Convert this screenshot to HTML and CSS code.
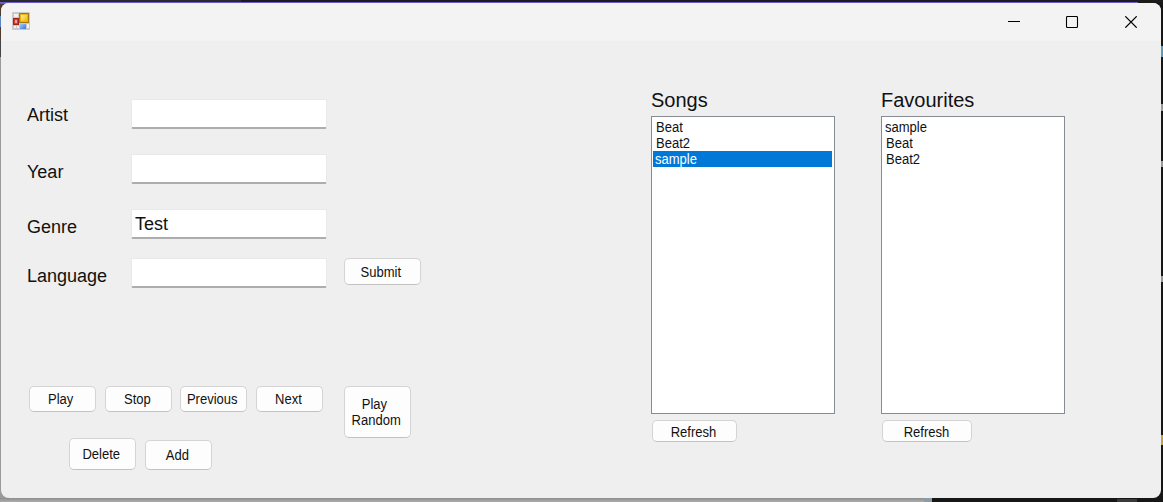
FILE: index.html
```html
<!DOCTYPE html>
<html lang="en">
<head>
<meta charset="utf-8">
<title>Music player</title>
<link rel="stylesheet" href="styles.css">
</head>
<body>
<div class="desktop">
  <div class="window">
    <header class="titlebar">
      <svg class="app-icon" width="18" height="18" viewBox="0 0 18 18">
        <defs>
          <linearGradient id="gold" x1="0" y1="0" x2="1" y2="1"><stop offset="0" stop-color="#fff0a0"/><stop offset="1" stop-color="#f3b400"/></linearGradient>
          <linearGradient id="blue" x1="0" y1="0" x2="1" y2="1"><stop offset="0" stop-color="#a0c8ff"/><stop offset="1" stop-color="#3478e0"/></linearGradient>
        </defs>
        <rect width="18" height="18" rx="1" fill="#c9c9c9"/>
        <path d="M2 2h4v3H2zM2 14h2v2H2zM5 14h2v2H5zM15 12h2v4h-2z" fill="#f2f2f2"/>
        <rect x="7" y="1" width="10" height="10" fill="#a57a14"/>
        <rect x="8" y="2" width="8" height="8" fill="#e8b213"/>
        <rect x="9" y="3" width="6" height="6" fill="url(#gold)"/>
        <rect x="1" y="6" width="6" height="7" fill="#a32318"/>
        <rect x="2" y="7" width="4" height="5" fill="#cf3d2e"/>
        <rect x="3" y="8" width="2" height="3" fill="#f0a49a"/>
        <rect x="8" y="12" width="6" height="5" fill="url(#blue)"/>
      </svg>
      <svg class="caption" width="130" height="12" viewBox="0 0 130 12" fill="none" stroke="#000">
        <path d="M0 5.5h12" stroke-width="1.1"/>
        <rect x="58.5" y=".5" width="11" height="11" rx="1" stroke-width="1.1"/>
        <path d="M117.3.3l11.4 11.4M128.7.3l-11.4 11.4" stroke-width="1.2"/>
      </svg>
    </header>
    <main class="client">
      <section class="editor">
        <form class="fields">
          <label class="label">Artist</label><div class="input"></div>
          <label class="label label-year">Year</label><div class="input"></div>
          <label class="label label-genre">Genre</label><div class="input">Test</div>
          <label class="label label-language">Language</label><div class="input"></div>
          <button type="button" class="btn submit"><span>Submit</span></button>
        </form>
        <div class="controls">
          <div class="control-rows">
            <div class="playback">
              <button class="btn"><span>Play</span></button>
              <button class="btn stop"><span>Stop</span></button>
              <button class="btn"><span>Previous</span></button>
              <button class="btn next"><span>Next</span></button>
            </div>
            <div class="manage">
              <button class="btn delete"><span>Delete</span></button>
              <button class="btn add"><span>Add</span></button>
            </div>
          </div>
          <button class="btn random"><span>Play<br>&nbsp;Random</span></button>
        </div>
      </section>
      <section class="list-panel">
        <h2 class="heading">Songs</h2>
        <ul class="list">
          <li class="indent"><span>Beat</span></li>
          <li class="indent"><span>Beat2</span></li>
          <li class="selected"><span>sample</span></li>
        </ul>
        <button class="btn refresh"><span>Refresh</span></button>
      </section>
      <section class="list-panel">
        <h2 class="heading">Favourites</h2>
        <ul class="list">
          <li><span>sample</span></li>
          <li class="indent"><span>Beat</span></li>
          <li class="indent"><span>Beat2</span></li>
        </ul>
        <button class="btn refresh wide"><span>Refresh</span></button>
      </section>
    </main>
  </div>
</div>
</body>
</html>
```
FILE: styles.css
```css
* { box-sizing: border-box; }

body {
  margin: 0;
  overflow: hidden;
  font-family: "Liberation Sans", Arial, sans-serif;
  color: #111;
}

.desktop {
  width: 1163px;
  height: 502px;
  padding: 3px 2px 4px 1px;
  background:
    linear-gradient(#6a5acd, #6a5acd) 0 2px / 1138px 2px no-repeat,
    linear-gradient(90deg, #2a2a2c 241px, #1b1b1b 241px) 0 0 / 100% 3px no-repeat,
    linear-gradient(#8d8d8d, #adadad) 0 498px / 924px 4px no-repeat,
    linear-gradient(#8d9aa8, #8d9aa8) 924px 498px / 8px 4px no-repeat,
    linear-gradient(#3a3a3a, #3a3a3a) 1117px 499px / 20px 3px no-repeat,
    linear-gradient(#999, #999) 1161px 104px / 2px 7px no-repeat,
    linear-gradient(#999, #999) 1161px 161px / 2px 6px no-repeat,
    linear-gradient(#999, #999) 1161px 276px / 2px 6px no-repeat,
    linear-gradient(#5b9ab8, #5b9ab8) 1161px 46px / 2px 11px no-repeat,
    linear-gradient(#c5a23c, #c5a23c) 1161px 435px / 2px 10px no-repeat,
    linear-gradient(#4d3b2c 16px, #5c86c0 16px 27px, #4d3b2c 27px 38px, #444 38px 57px, #9a9a9a 57px) 0 0 / 8px 100% no-repeat,
    #161616;
}

.window {
  height: 495px;
  border-radius: 8px;
  background: #efefef;
  overflow: hidden;
}

.titlebar {
  display: flex;
  justify-content: space-between;
  height: 38px;
  padding: 9px 23px 0 11px;
  background: #f3f3f3;
}

.caption { margin-top: 4px; }

.client {
  display: grid;
  grid-template-columns: 624px 184px 230px;
  padding-left: 26px;
}

.client .list-panel + .list-panel { margin-left: 46px; }

.fields {
  display: grid;
  grid-template-columns: 104px 196px 77px;
  grid-template-rows: 55px 55px 49px 30px;
  padding-top: 58px;
}

.label {
  grid-column: 1;
  padding-top: 5px;
  font-size: 18px;
  line-height: 22px;
}

.label-year,
.label-genre,
.label-language { padding-top: 7px; }

.input {
  grid-column: 2;
  height: 30px;
  padding: 0 3px;
  border: 1px solid #e9e9e9;
  border-bottom: 2px solid #adadad;
  border-radius: 2px;
  background: #fff;
  font-size: 18px;
  line-height: 29px;
}

.btn {
  display: flex;
  align-items: center;
  justify-content: center;
  width: 67px;
  height: 26px;
  padding: 0;
  border: 1px solid #d4d4d4;
  border-bottom-color: #c2c2c2;
  border-radius: 5px;
  background: #fdfdfd;
  color: #111;
  font: 14px/16px "Liberation Sans", Arial, sans-serif;
}

.btn span {
  display: block;
  transform: scaleX(.93);
  white-space: nowrap;
}

.submit {
  grid-column: 3;
  grid-row: 4;
  width: 77px;
  height: 27px;
  margin-left: 17px;
  padding-right: 4px;
}

.controls {
  display: flex;
  gap: 20px;
  padding: 98px 0 0 2px;
}

.playback {
  display: flex;
  width: 295px;
  gap: 9px;
}

.playback .btn { padding-right: 3px; }
.playback .stop { margin-right: -1px; }

.manage {
  display: flex;
  gap: 9px;
  padding: 26px 0 0 40px;
}

.delete { height: 32px; padding: 0 2px 1px 0; }
.add { height: 30px; margin-top: 2px; padding-right: 3px; }

.random {
  height: 52px;
  padding-right: 7px;
}

.list-panel { padding-top: 47px; width: 184px; }

.heading {
  margin: 0;
  font-size: 20px;
  font-weight: 400;
  line-height: 24px;
}

.list {
  height: 298px;
  margin: 4px 0 6px;
  padding: 2px 1px;
  border: 1px solid #868b94;
  background: #fff;
  list-style: none;
  font-size: 14px;
  line-height: 17px;
}

.list li {
  height: 16px;
  padding-left: 2px;
}

.list .indent { padding-left: 3px; }

.list span {
  display: inline-block;
  transform: scaleX(.93);
  transform-origin: left;
}

.list .selected {
  margin-right: 1px;
  background: #0078d7;
  color: #fff;
}

.refresh {
  width: 85px;
  height: 22px;
  margin-left: 1px;
  padding-top: 2px;
  padding-right: 1px;
}

.wide {
  width: 90px;
  padding-right: 1px;
}
```
